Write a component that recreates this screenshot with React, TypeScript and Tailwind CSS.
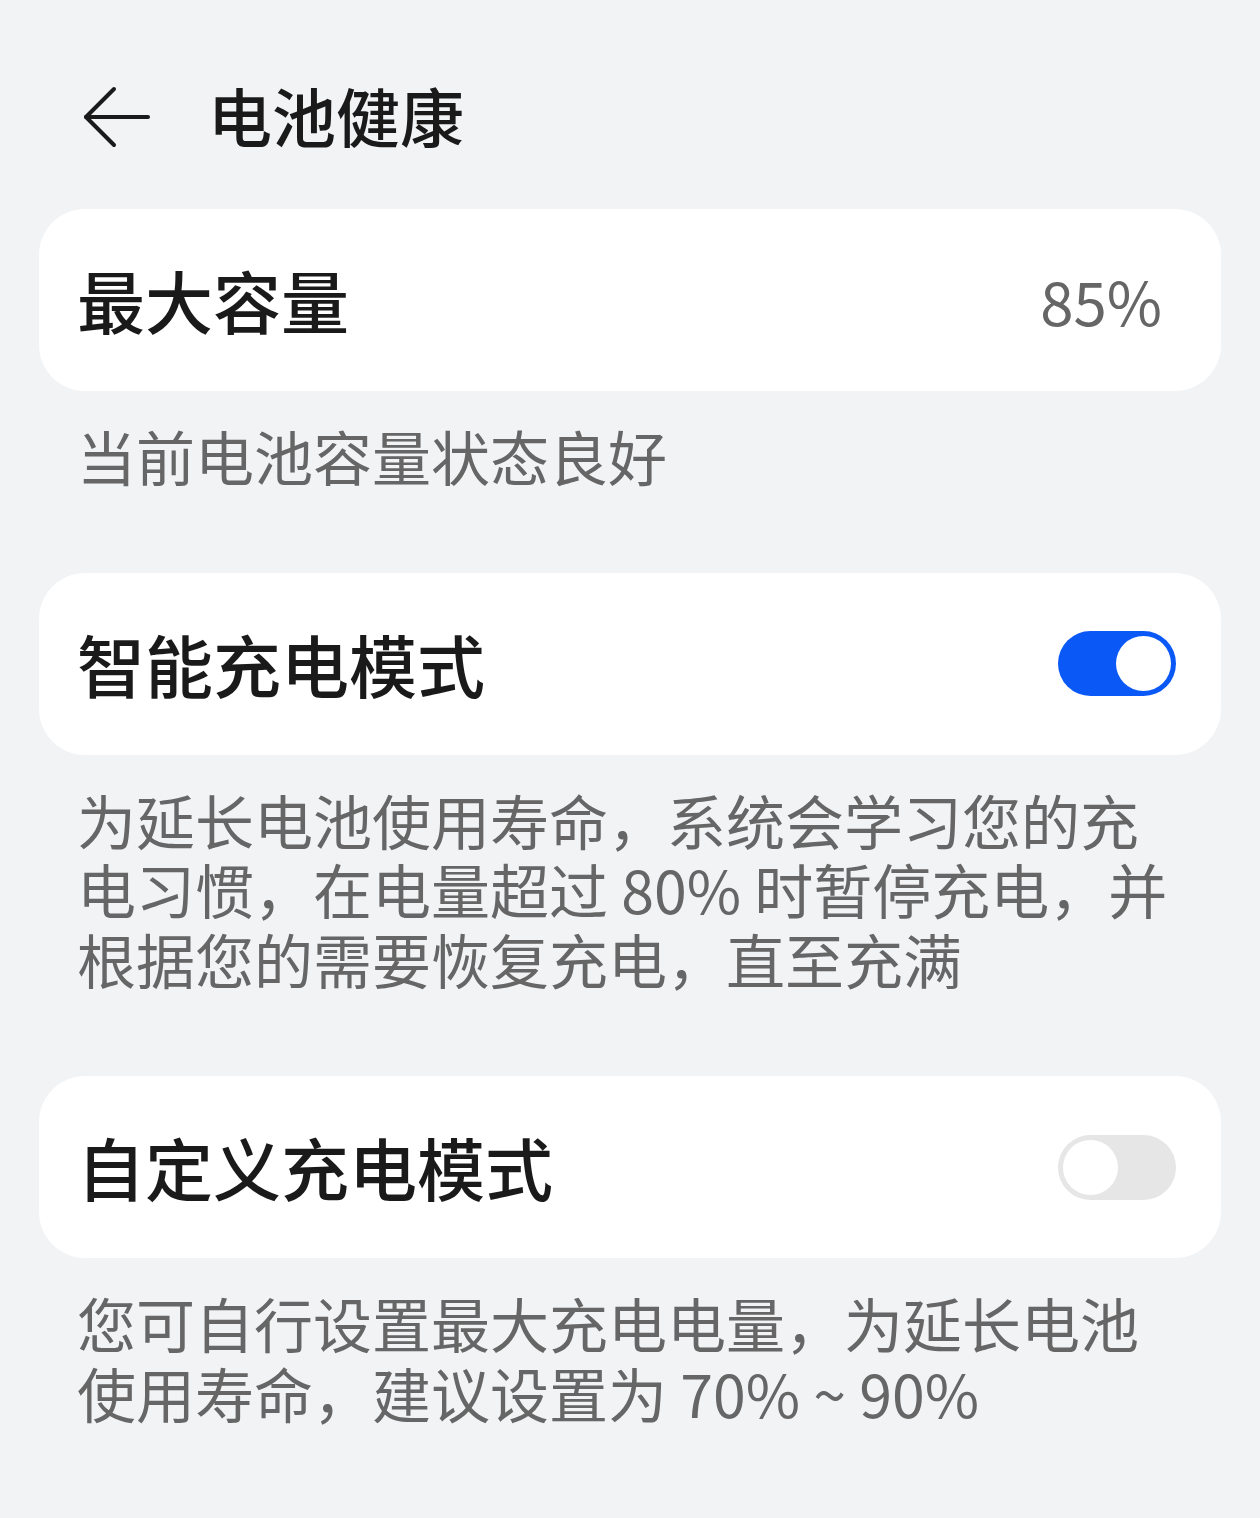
import React from "react";

const font = { fontFamily: '"Noto Sans CJK SC", "Noto Sans", sans-serif' };

function Toggle({ on }: { on: boolean }) {
  return (
    <div
      className={
        "w-[118px] h-[65px] rounded-full flex items-center px-[5px] " +
        (on ? "bg-[#0a59f7] justify-end" : "bg-[#e6e6e6] justify-start")
      }
    >
      <div className="w-[55px] h-[55px] rounded-full bg-white" />
    </div>
  );
}

function Card({ title, right }: { title: string; right: React.ReactNode }) {
  return (
    <div className="mx-[39px] h-[182px] rounded-[46px] bg-white flex items-center justify-between pl-[38px] pr-[45px]">
      <span className="text-[68px] leading-none font-medium text-[#1a1a1a]">{title}</span>
      {right}
    </div>
  );
}

function Desc({ children }: { children: React.ReactNode }) {
  return (
    <p className="pl-[77px] w-[1182px] pt-[30px] pb-[2px] text-[59px] leading-[69.5px] text-[#666666]">
      {children}
    </p>
  );
}

export default function App() {
  return (
    <div className="w-[1260px] h-[1518px] bg-[#f1f3f5] overflow-hidden" style={font}>
      <div className="pt-[66px] h-[162px] mb-[47px] flex items-center">
        <svg
          className="ml-[83px] mt-[6px]"
          width="68"
          height="64"
          viewBox="0 0 68 64"
          fill="none"
          stroke="#1a1a1a"
          strokeWidth="4"
          strokeLinecap="round"
          strokeLinejoin="round"
        >
          <path d="M3 32 H65" />
          <path d="M31 4 L3 32 L31 60" />
        </svg>
        <span className="ml-[57px] text-[64px] leading-none font-medium text-[#1a1a1a]">电池健康</span>
      </div>

      <Card
        title="最大容量"
        right={<span className="mr-[14px] text-[60px] leading-none text-[#666666]">85%</span>}
      />
      <Desc>当前电池容量状态良好</Desc>

      <div className="h-[80px]" />
      <Card title="智能充电模式" right={<Toggle on={true} />} />
      <Desc>为延长电池使用寿命，系统会学习您的充电习惯，在电量超过 80% 时暂停充电，并根据您的需要恢复充电，直至充满</Desc>

      <div className="h-[81px]" />
      <Card title="自定义充电模式" right={<Toggle on={false} />} />
      <Desc>您可自行设置最大充电电量，为延长电池使用寿命，建议设置为 70% ~ 90%</Desc>
    </div>
  );
}
